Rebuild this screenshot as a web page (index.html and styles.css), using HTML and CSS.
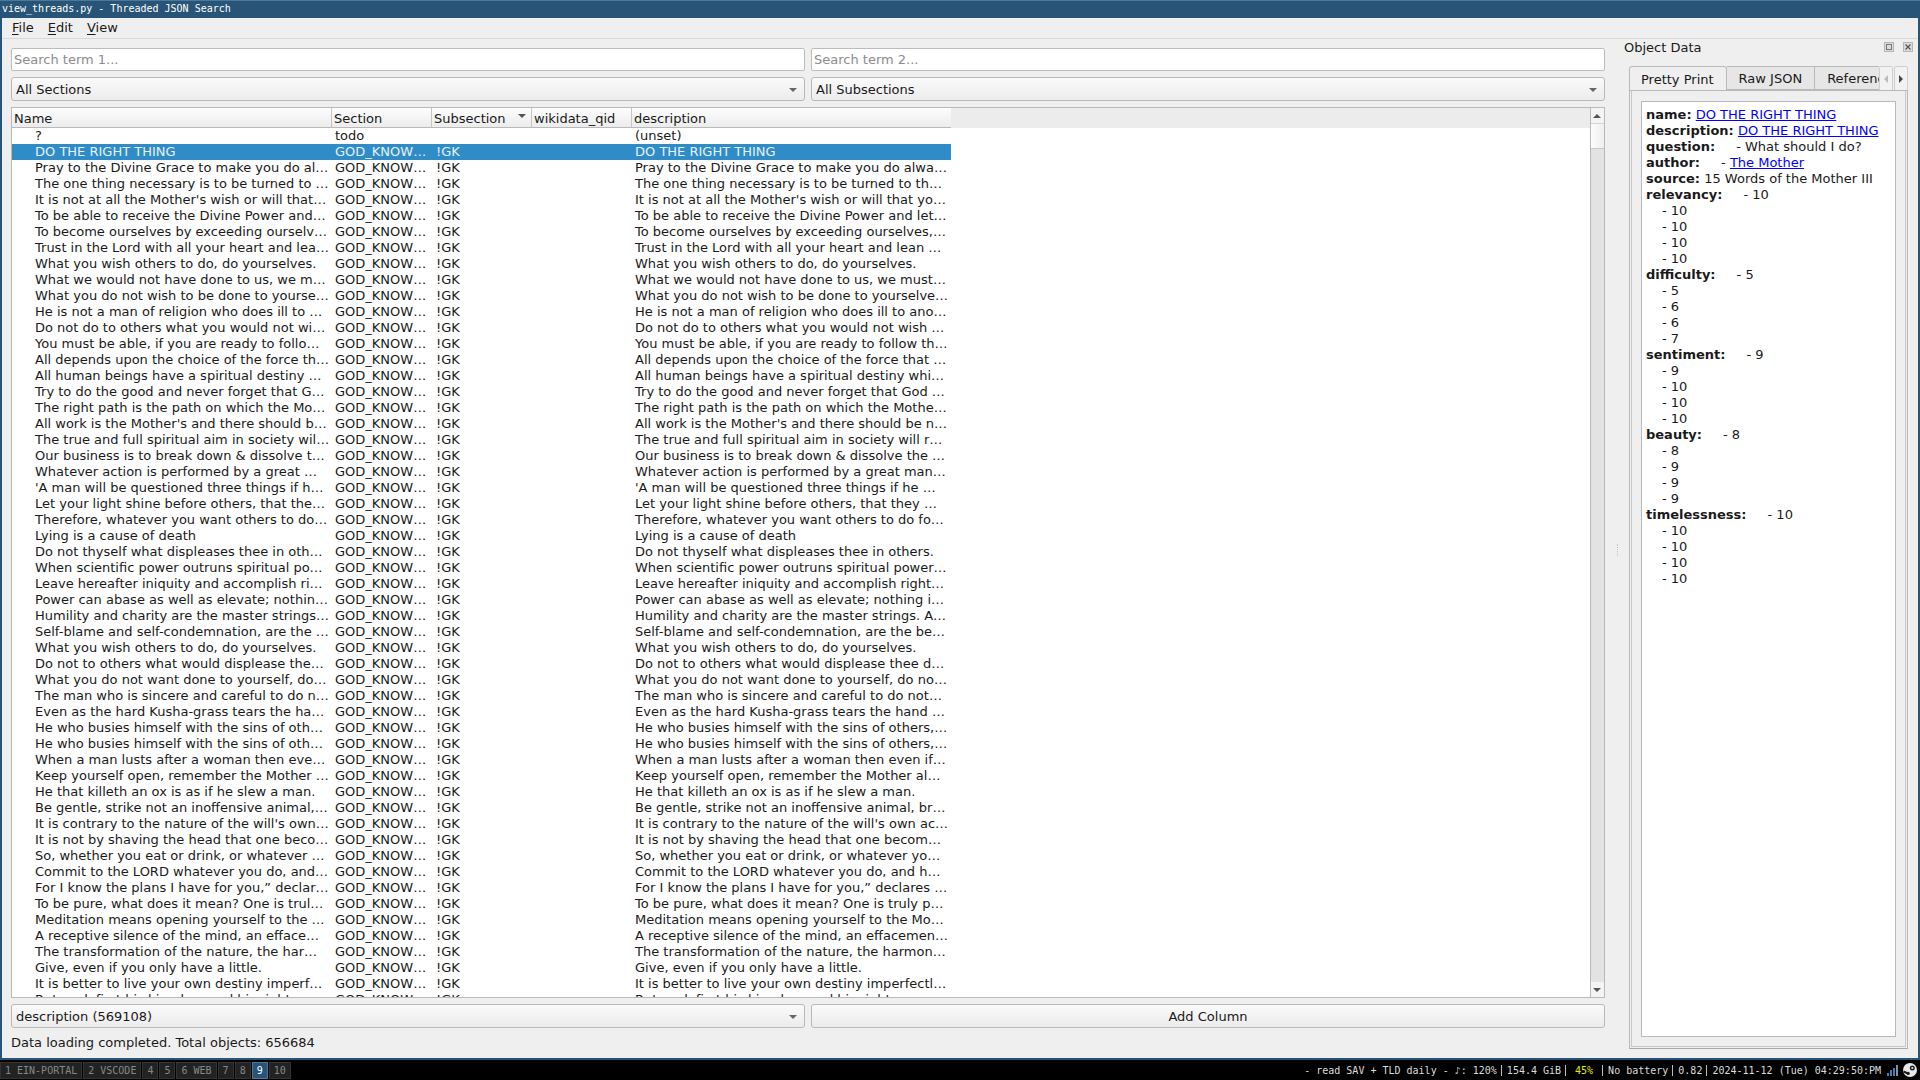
FILE: index.html
```html
<!DOCTYPE html>
<html>

<head>
  <title>view_threads.py - Threaded JSON Search</title>
  <link rel="stylesheet" href="styles.css">
</head>

<body>
  <div class="titlebar">view_threads.py - Threaded JSON Search</div>
  <div class="window">
    <div class="menubar">
      <span class="menu"><u>F</u>ile</span>
      <span class="menu"><u>E</u>dit</span>
      <span class="menu"><u>V</u>iew</span>
    </div>
    <div class="main">
      <div class="left">
        <div class="two-col">
          <div class="input">Search term 1...</div>
          <div class="input">Search term 2...</div>
        </div>
        <div class="two-col">
          <div class="combo">All Sections<i class="arrow"></i></div>
          <div class="combo">All Subsections<i class="arrow"></i></div>
        </div>
        <div class="table">
          <div class="table-view">
            <div class="header">
              <div class="hcell c-name">Name</div>
              <div class="hcell c-section">Section</div>
              <div class="hcell c-sub">Subsection<i class="sort"></i></div>
              <div class="hcell c-qid">wikidata_qid</div>
              <div class="hcell c-desc">description</div>
            </div>
            <div class="rows">
              <div class="row"><span class="c-name">?</span><span class="c-section">todo</span><span class="c-sub"></span><span class="c-qid"></span><span class="c-desc">(unset)</span></div>
              <div class="row selected"><span class="c-name">DO THE RIGHT THING</span><span class="c-section">GOD_KNOW…</span><span class="c-sub">!GK</span><span class="c-qid"></span><span class="c-desc">DO THE RIGHT THING</span></div>
              <div class="row"><span class="c-name">Pray to the Divine Grace to make you do al…</span><span class="c-section">GOD_KNOW…</span><span class="c-sub">!GK</span><span class="c-qid"></span><span class="c-desc">Pray to the Divine Grace to make you do alwa…</span></div>
              <div class="row"><span class="c-name">The one thing necessary is to be turned to …</span><span class="c-section">GOD_KNOW…</span><span class="c-sub">!GK</span><span class="c-qid"></span><span class="c-desc">The one thing necessary is to be turned to th…</span></div>
              <div class="row"><span class="c-name">It is not at all the Mother's wish or will that…</span><span class="c-section">GOD_KNOW…</span><span class="c-sub">!GK</span><span class="c-qid"></span><span class="c-desc">It is not at all the Mother's wish or will that yo…</span></div>
              <div class="row"><span class="c-name">To be able to receive the Divine Power and…</span><span class="c-section">GOD_KNOW…</span><span class="c-sub">!GK</span><span class="c-qid"></span><span class="c-desc">To be able to receive the Divine Power and let…</span></div>
              <div class="row"><span class="c-name">To become ourselves by exceeding ourselv…</span><span class="c-section">GOD_KNOW…</span><span class="c-sub">!GK</span><span class="c-qid"></span><span class="c-desc">To become ourselves by exceeding ourselves,…</span></div>
              <div class="row"><span class="c-name">Trust in the Lord with all your heart and lea…</span><span class="c-section">GOD_KNOW…</span><span class="c-sub">!GK</span><span class="c-qid"></span><span class="c-desc">Trust in the Lord with all your heart and lean …</span></div>
              <div class="row"><span class="c-name">What you wish others to do, do yourselves.</span><span class="c-section">GOD_KNOW…</span><span class="c-sub">!GK</span><span class="c-qid"></span><span class="c-desc">What you wish others to do, do yourselves.</span></div>
              <div class="row"><span class="c-name">What we would not have done to us, we m…</span><span class="c-section">GOD_KNOW…</span><span class="c-sub">!GK</span><span class="c-qid"></span><span class="c-desc">What we would not have done to us, we must…</span></div>
              <div class="row"><span class="c-name">What you do not wish to be done to yourse…</span><span class="c-section">GOD_KNOW…</span><span class="c-sub">!GK</span><span class="c-qid"></span><span class="c-desc">What you do not wish to be done to yourselve…</span></div>
              <div class="row"><span class="c-name">He is not a man of religion who does ill to …</span><span class="c-section">GOD_KNOW…</span><span class="c-sub">!GK</span><span class="c-qid"></span><span class="c-desc">He is not a man of religion who does ill to ano…</span></div>
              <div class="row"><span class="c-name">Do not do to others what you would not wi…</span><span class="c-section">GOD_KNOW…</span><span class="c-sub">!GK</span><span class="c-qid"></span><span class="c-desc">Do not do to others what you would not wish …</span></div>
              <div class="row"><span class="c-name">You must be able, if you are ready to follo…</span><span class="c-section">GOD_KNOW…</span><span class="c-sub">!GK</span><span class="c-qid"></span><span class="c-desc">You must be able, if you are ready to follow th…</span></div>
              <div class="row"><span class="c-name">All depends upon the choice of the force th…</span><span class="c-section">GOD_KNOW…</span><span class="c-sub">!GK</span><span class="c-qid"></span><span class="c-desc">All depends upon the choice of the force that …</span></div>
              <div class="row"><span class="c-name">All human beings have a spiritual destiny …</span><span class="c-section">GOD_KNOW…</span><span class="c-sub">!GK</span><span class="c-qid"></span><span class="c-desc">All human beings have a spiritual destiny whi…</span></div>
              <div class="row"><span class="c-name">Try to do the good and never forget that G…</span><span class="c-section">GOD_KNOW…</span><span class="c-sub">!GK</span><span class="c-qid"></span><span class="c-desc">Try to do the good and never forget that God …</span></div>
              <div class="row"><span class="c-name">The right path is the path on which the Mo…</span><span class="c-section">GOD_KNOW…</span><span class="c-sub">!GK</span><span class="c-qid"></span><span class="c-desc">The right path is the path on which the Mothe…</span></div>
              <div class="row"><span class="c-name">All work is the Mother's and there should b…</span><span class="c-section">GOD_KNOW…</span><span class="c-sub">!GK</span><span class="c-qid"></span><span class="c-desc">All work is the Mother's and there should be n…</span></div>
              <div class="row"><span class="c-name">The true and full spiritual aim in society wil…</span><span class="c-section">GOD_KNOW…</span><span class="c-sub">!GK</span><span class="c-qid"></span><span class="c-desc">The true and full spiritual aim in society will r…</span></div>
              <div class="row"><span class="c-name">Our business is to break down &amp; dissolve t…</span><span class="c-section">GOD_KNOW…</span><span class="c-sub">!GK</span><span class="c-qid"></span><span class="c-desc">Our business is to break down &amp; dissolve the …</span></div>
              <div class="row"><span class="c-name">Whatever action is performed by a great …</span><span class="c-section">GOD_KNOW…</span><span class="c-sub">!GK</span><span class="c-qid"></span><span class="c-desc">Whatever action is performed by a great man…</span></div>
              <div class="row"><span class="c-name">'A man will be questioned three things if h…</span><span class="c-section">GOD_KNOW…</span><span class="c-sub">!GK</span><span class="c-qid"></span><span class="c-desc">'A man will be questioned three things if he …</span></div>
              <div class="row"><span class="c-name">Let your light shine before others, that the…</span><span class="c-section">GOD_KNOW…</span><span class="c-sub">!GK</span><span class="c-qid"></span><span class="c-desc">Let your light shine before others, that they …</span></div>
              <div class="row"><span class="c-name">Therefore, whatever you want others to do…</span><span class="c-section">GOD_KNOW…</span><span class="c-sub">!GK</span><span class="c-qid"></span><span class="c-desc">Therefore, whatever you want others to do fo…</span></div>
              <div class="row"><span class="c-name">Lying is a cause of death</span><span class="c-section">GOD_KNOW…</span><span class="c-sub">!GK</span><span class="c-qid"></span><span class="c-desc">Lying is a cause of death</span></div>
              <div class="row"><span class="c-name">Do not thyself what displeases thee in oth…</span><span class="c-section">GOD_KNOW…</span><span class="c-sub">!GK</span><span class="c-qid"></span><span class="c-desc">Do not thyself what displeases thee in others.</span></div>
              <div class="row"><span class="c-name">When scientific power outruns spiritual po…</span><span class="c-section">GOD_KNOW…</span><span class="c-sub">!GK</span><span class="c-qid"></span><span class="c-desc">When scientific power outruns spiritual power…</span></div>
              <div class="row"><span class="c-name">Leave hereafter iniquity and accomplish ri…</span><span class="c-section">GOD_KNOW…</span><span class="c-sub">!GK</span><span class="c-qid"></span><span class="c-desc">Leave hereafter iniquity and accomplish right…</span></div>
              <div class="row"><span class="c-name">Power can abase as well as elevate; nothin…</span><span class="c-section">GOD_KNOW…</span><span class="c-sub">!GK</span><span class="c-qid"></span><span class="c-desc">Power can abase as well as elevate; nothing i…</span></div>
              <div class="row"><span class="c-name">Humility and charity are the master strings…</span><span class="c-section">GOD_KNOW…</span><span class="c-sub">!GK</span><span class="c-qid"></span><span class="c-desc">Humility and charity are the master strings. A…</span></div>
              <div class="row"><span class="c-name">Self-blame and self-condemnation, are the …</span><span class="c-section">GOD_KNOW…</span><span class="c-sub">!GK</span><span class="c-qid"></span><span class="c-desc">Self-blame and self-condemnation, are the be…</span></div>
              <div class="row"><span class="c-name">What you wish others to do, do yourselves.</span><span class="c-section">GOD_KNOW…</span><span class="c-sub">!GK</span><span class="c-qid"></span><span class="c-desc">What you wish others to do, do yourselves.</span></div>
              <div class="row"><span class="c-name">Do not to others what would displease the…</span><span class="c-section">GOD_KNOW…</span><span class="c-sub">!GK</span><span class="c-qid"></span><span class="c-desc">Do not to others what would displease thee d…</span></div>
              <div class="row"><span class="c-name">What you do not want done to yourself, do…</span><span class="c-section">GOD_KNOW…</span><span class="c-sub">!GK</span><span class="c-qid"></span><span class="c-desc">What you do not want done to yourself, do no…</span></div>
              <div class="row"><span class="c-name">The man who is sincere and careful to do n…</span><span class="c-section">GOD_KNOW…</span><span class="c-sub">!GK</span><span class="c-qid"></span><span class="c-desc">The man who is sincere and careful to do not…</span></div>
              <div class="row"><span class="c-name">Even as the hard Kusha-grass tears the ha…</span><span class="c-section">GOD_KNOW…</span><span class="c-sub">!GK</span><span class="c-qid"></span><span class="c-desc">Even as the hard Kusha-grass tears the hand …</span></div>
              <div class="row"><span class="c-name">He who busies himself with the sins of oth…</span><span class="c-section">GOD_KNOW…</span><span class="c-sub">!GK</span><span class="c-qid"></span><span class="c-desc">He who busies himself with the sins of others,…</span></div>
              <div class="row"><span class="c-name">He who busies himself with the sins of oth…</span><span class="c-section">GOD_KNOW…</span><span class="c-sub">!GK</span><span class="c-qid"></span><span class="c-desc">He who busies himself with the sins of others,…</span></div>
              <div class="row"><span class="c-name">When a man lusts after a woman then eve…</span><span class="c-section">GOD_KNOW…</span><span class="c-sub">!GK</span><span class="c-qid"></span><span class="c-desc">When a man lusts after a woman then even if…</span></div>
              <div class="row"><span class="c-name">Keep yourself open, remember the Mother …</span><span class="c-section">GOD_KNOW…</span><span class="c-sub">!GK</span><span class="c-qid"></span><span class="c-desc">Keep yourself open, remember the Mother al…</span></div>
              <div class="row"><span class="c-name">He that killeth an ox is as if he slew a man.</span><span class="c-section">GOD_KNOW…</span><span class="c-sub">!GK</span><span class="c-qid"></span><span class="c-desc">He that killeth an ox is as if he slew a man.</span></div>
              <div class="row"><span class="c-name">Be gentle, strike not an inoffensive animal,…</span><span class="c-section">GOD_KNOW…</span><span class="c-sub">!GK</span><span class="c-qid"></span><span class="c-desc">Be gentle, strike not an inoffensive animal, br…</span></div>
              <div class="row"><span class="c-name">It is contrary to the nature of the will's own…</span><span class="c-section">GOD_KNOW…</span><span class="c-sub">!GK</span><span class="c-qid"></span><span class="c-desc">It is contrary to the nature of the will's own ac…</span></div>
              <div class="row"><span class="c-name">It is not by shaving the head that one beco…</span><span class="c-section">GOD_KNOW…</span><span class="c-sub">!GK</span><span class="c-qid"></span><span class="c-desc">It is not by shaving the head that one becom…</span></div>
              <div class="row"><span class="c-name">So, whether you eat or drink, or whatever …</span><span class="c-section">GOD_KNOW…</span><span class="c-sub">!GK</span><span class="c-qid"></span><span class="c-desc">So, whether you eat or drink, or whatever yo…</span></div>
              <div class="row"><span class="c-name">Commit to the LORD whatever you do, and…</span><span class="c-section">GOD_KNOW…</span><span class="c-sub">!GK</span><span class="c-qid"></span><span class="c-desc">Commit to the LORD whatever you do, and h…</span></div>
              <div class="row"><span class="c-name">For I know the plans I have for you,” declar…</span><span class="c-section">GOD_KNOW…</span><span class="c-sub">!GK</span><span class="c-qid"></span><span class="c-desc">For I know the plans I have for you,” declares …</span></div>
              <div class="row"><span class="c-name">To be pure, what does it mean? One is trul…</span><span class="c-section">GOD_KNOW…</span><span class="c-sub">!GK</span><span class="c-qid"></span><span class="c-desc">To be pure, what does it mean? One is truly p…</span></div>
              <div class="row"><span class="c-name">Meditation means opening yourself to the …</span><span class="c-section">GOD_KNOW…</span><span class="c-sub">!GK</span><span class="c-qid"></span><span class="c-desc">Meditation means opening yourself to the Mo…</span></div>
              <div class="row"><span class="c-name">A receptive silence of the mind, an efface…</span><span class="c-section">GOD_KNOW…</span><span class="c-sub">!GK</span><span class="c-qid"></span><span class="c-desc">A receptive silence of the mind, an effacemen…</span></div>
              <div class="row"><span class="c-name">The transformation of the nature, the har…</span><span class="c-section">GOD_KNOW…</span><span class="c-sub">!GK</span><span class="c-qid"></span><span class="c-desc">The transformation of the nature, the harmon…</span></div>
              <div class="row"><span class="c-name">Give, even if you only have a little.</span><span class="c-section">GOD_KNOW…</span><span class="c-sub">!GK</span><span class="c-qid"></span><span class="c-desc">Give, even if you only have a little.</span></div>
              <div class="row"><span class="c-name">It is better to live your own destiny imperf…</span><span class="c-section">GOD_KNOW…</span><span class="c-sub">!GK</span><span class="c-qid"></span><span class="c-desc">It is better to live your own destiny imperfectl…</span></div>
              <div class="row"><span class="c-name">But seek first his kingdom and his right…</span><span class="c-section">GOD_KNOW…</span><span class="c-sub">!GK</span><span class="c-qid"></span><span class="c-desc">But seek first his kingdom and his right…</span></div>
            </div>
          </div>
          <div class="scrollbar">
            <div class="sb-btn"><i class="tri-up"></i></div>
            <div class="sb-handle"></div>
            <div class="sb-track"></div>
            <div class="sb-btn"><i class="tri-down"></i></div>
          </div>
        </div>
        <div class="two-col">
          <div class="combo">description (569108)<i class="arrow"></i></div>
          <div class="button">Add Column</div>
        </div>
        <div class="status">Data loading completed. Total objects: 656684</div>
      </div>

      <div class="dock">
        <div class="splitter"></div>
        <div class="dock-title">
          <span>Object Data</span>
          <div class="dock-btns">
            <span class="dock-btn"><svg width="10" height="10" viewBox="0 0 10 10"><rect x="0.5" y="0.5" width="9" height="9" fill="#dcdcdc" stroke="#b5b5b5"/><rect x="2.5" y="2.5" width="5" height="5" fill="none" stroke="#777"/></svg></span>
            <span class="dock-btn"><svg width="10" height="10" viewBox="0 0 10 10"><rect x="0.5" y="0.5" width="9" height="9" fill="#dcdcdc" stroke="#b5b5b5"/><path d="M2.5 2.5l5 5M7.5 2.5l-5 5" stroke="#555" stroke-width="1.2"/></svg></span>
          </div>
        </div>
        <div class="tabs">
          <div class="tab active">Pretty Print</div>
          <div class="tab">Raw JSON</div>
          <div class="tab">References</div>
          <div class="tab-scroll">
            <span class="tab-arrow"><i class="tri-left"></i></span>
            <span class="tab-arrow"><i class="tri-right"></i></span>
          </div>
        </div>
        <div class="pane">
          <div class="pane-inner">
            <div class="browser">
              <div><b>name:</b> <a href="#">DO THE RIGHT THING</a></div>
              <div><b>description:</b> <a href="#">DO THE RIGHT THING</a></div>
              <div><b>question:</b><span class="gap-a">- What should I do?</span></div>
              <div><b>author:</b><span class="gap-a">- <a href="#">The Mother</a></span></div>
              <div><b>source:</b> 15 Words of the Mother III</div>
              <div><b>relevancy:</b><span class="gap-a">- 10</span></div>
              <div class="sub">- 10</div>
              <div class="sub">- 10</div>
              <div class="sub">- 10</div>
              <div class="sub">- 10</div>
              <div><b>difficulty:</b><span class="gap-a">- 5</span></div>
              <div class="sub">- 5</div>
              <div class="sub">- 6</div>
              <div class="sub">- 6</div>
              <div class="sub">- 7</div>
              <div><b>sentiment:</b><span class="gap-a">- 9</span></div>
              <div class="sub">- 9</div>
              <div class="sub">- 10</div>
              <div class="sub">- 10</div>
              <div class="sub">- 10</div>
              <div><b>beauty:</b><span class="gap-a">- 8</span></div>
              <div class="sub">- 8</div>
              <div class="sub">- 9</div>
              <div class="sub">- 9</div>
              <div class="sub">- 9</div>
              <div><b>timelessness:</b><span class="gap-a">- 10</span></div>
              <div class="sub">- 10</div>
              <div class="sub">- 10</div>
              <div class="sub">- 10</div>
              <div class="sub">- 10</div>
            </div>
          </div>
        </div>
      </div>
    </div>
  </div>

  <div class="bar">
    <div class="workspaces">
      <span class="ws">1 EIN-PORTAL</span>
      <span class="ws">2 VSCODE</span>
      <span class="ws">4</span>
      <span class="ws">5</span>
      <span class="ws">6 WEB</span>
      <span class="ws">7</span>
      <span class="ws">8</span>
      <span class="ws focused">9</span>
      <span class="ws">10</span>
    </div>
    <div class="tray">
      <span class="st">- read SAV + TLD daily - ♪: 120%</span>
      <span class="st">154.4 GiB</span>
      <span class="st load">45%</span>
      <span class="st">No battery</span>
      <span class="st">0.82</span>
      <span class="st last">2024-11-12 (Tue) 04:29:50:PM</span>
      <svg class="wifi" width="12" height="11" viewBox="0 0 12 11"><rect x="0" y="8" width="2" height="3" fill="#3f7fc0"/><rect x="3" y="5" width="2" height="6" fill="#3f7fc0"/><rect x="6" y="3" width="2" height="8" fill="#3f7fc0"/><rect x="9" y="0" width="2" height="11" fill="#8a8f94"/></svg>
      <svg class="steam" width="14" height="14" viewBox="0 0 14 14"><circle cx="7" cy="7" r="7" fill="#e8e8e8"/><circle cx="9.3" cy="5" r="2.5" fill="#1a1a1a"/><circle cx="9.3" cy="5" r="1.1" fill="#e8e8e8"/><path d="M0.5 8.5l4.5 2" stroke="#1a1a1a" stroke-width="2"/><circle cx="5.2" cy="10.4" r="1.6" fill="#1a1a1a"/></svg>
    </div>
  </div>
</body>

</html>
```

FILE: styles.css
```css
* {
  box-sizing: border-box;
}

html,
body {
  margin: 0;
  height: 100%;
}

body {
  width: 1920px;
  height: 1080px;
  overflow: hidden;
  display: flex;
  flex-direction: column;
  font-family: "DejaVu Sans", sans-serif;
  font-size: 13px;
  color: #1a1a1a;
  background: #000;
}

.titlebar {
  height: 18px;
  flex: none;
  padding-left: 2px;
  background: #285577;
  border-top: 1px solid #4c7899;
  color: #fff;
  font-family: "DejaVu Sans Mono", monospace;
  font-size: 10px;
  line-height: 15px;
}

.window {
  flex: 1;
  min-height: 0;
  display: flex;
  flex-direction: column;
  background: #efefef;
  border-left: 2px solid #285577;
  border-right: 2px solid #285577;
  border-bottom: 2px solid #285577;
}

.menubar {
  height: 21px;
  flex: none;
  display: flex;
  align-items: center;
  padding: 0 0 2px 10px;
  gap: 14px;
  border-bottom: 1px solid #d8d8d8;
}

.menu u {
  text-underline-offset: 2px;
}

.main {
  flex: 1;
  min-height: 0;
  display: flex;
}

.left {
  width: 1603px;
  flex: none;
  padding: 9px 0 6px 9px;
  display: flex;
  flex-direction: column;
  gap: 6px;
}

.two-col {
  display: grid;
  grid-template-columns: 794px 794px;
  gap: 6px;
  flex: none;
}

.input {
  height: 23px;
  padding: 0 2px;
  line-height: 21px;
  background: #fff;
  border: 1px solid #bcbcbc;
  border-radius: 2px;
  color: #8c8c8c;
}

.combo,
.button {
  position: relative;
  height: 24px;
  padding: 0 4px;
  line-height: 24px;
  background: linear-gradient(#fafafa, #ececec);
  border: 1px solid #b9b9b9;
  border-radius: 3px;
}

.button {
  text-align: center;
}

.arrow {
  position: absolute;
  right: 7px;
  top: 10px;
  border-left: 4px solid transparent;
  border-right: 4px solid transparent;
  border-top: 4px solid #666;
}

.table {
  flex: 1;
  min-height: 0;
  display: flex;
  background: #fff;
  border: 1px solid #b9b9b9;
}

.table-view {
  flex: 1;
  min-width: 0;
  overflow: hidden;
}

.header {
  display: flex;
  height: 20px;
  background: #ececec;
}

.hcell {
  position: relative;
  height: 20px;
  padding-left: 2px;
  line-height: 21px;
  background: linear-gradient(#fdfdfd, #ececec);
  border-right: 1px solid #c4c4c4;
  border-bottom: 1px solid #b9b9b9;
}

.hcell.c-desc {
  border-right: 0;
}

.sort {
  position: absolute;
  right: 5px;
  top: 6px;
  border-left: 4px solid transparent;
  border-right: 4px solid transparent;
  border-top: 4px solid #555;
}

.c-name {
  width: 320px;
}

.c-section,
.c-sub,
.c-qid {
  width: 100px;
}

.c-desc {
  width: 319px;
}

.rows {
  overflow: hidden;
}

.row {
  display: flex;
  height: 16px;
  line-height: 16px;
  white-space: nowrap;
  width: 939px;
}

.row span {
  display: block;
  overflow: hidden;
  padding-left: 3px;
}

.row .c-name {
  padding-left: 23px;
}

.row .c-sub {
  padding-left: 4px;
}

.selected {
  background: #308cc6;
  color: #e6f1f9;
}

.scrollbar {
  width: 14px;
  flex: none;
  display: flex;
  flex-direction: column;
  background: #e3e3e3;
  border-left: 1px solid #b9b9b9;
}

.sb-btn {
  height: 15px;
  flex: none;
  display: flex;
  align-items: center;
  justify-content: center;
  padding-right: 1px;
  background: #f4f4f4;
}

.sb-handle {
  height: 26px;
  flex: none;
  background: linear-gradient(90deg, #fdfdfd, #eeeeee);
  border-top: 1px solid #d4d4d4;
  border-bottom: 1px solid #c8c8c8;
}

.sb-track {
  flex: 1;
}

.tri-up {
  border-left: 4px solid transparent;
  border-right: 4px solid transparent;
  border-bottom: 4px solid #555;
}

.tri-down {
  border-left: 4px solid transparent;
  border-right: 4px solid transparent;
  border-top: 4px solid #555;
}

.tri-left {
  border-top: 4px solid transparent;
  border-bottom: 4px solid transparent;
  border-right: 4px solid #bbb;
}

.tri-right {
  border-top: 4px solid transparent;
  border-bottom: 4px solid transparent;
  border-left: 4px solid #444;
}

.status {
  height: 18px;
  line-height: 18px;
  flex: none;
}

.dock {
  position: relative;
  flex: 1;
  min-width: 0;
  padding: 0 10px 9px 24px;
  display: flex;
  flex-direction: column;
}

.splitter {
  position: absolute;
  left: 12px;
  top: 505px;
  height: 12px;
  border-left: 1px dotted #c4c4c4;
}

.dock-title {
  height: 27px;
  flex: none;
  display: flex;
  align-items: center;
  justify-content: space-between;
  padding-bottom: 11px;
  margin-left: -5px;
  margin-right: -5px;
}

.dock-btns {
  display: flex;
  gap: 9px;
}

.dock-btn {
  width: 10px;
  height: 10px;
  display: flex;
}

.tabs {
  position: relative;
  display: flex;
  align-items: flex-end;
  height: 25px;
  flex: none;
  overflow: hidden;
  border-bottom: 1px solid #b9b9b9;
}

.tab {
  height: 24px;
  flex: none;
  padding: 0 12px;
  line-height: 24px;
  background: #e6e6e6;
  border: 1px solid #b9b9b9;
  border-left: 0;
  white-space: nowrap;
}

.tab.active {
  position: relative;
  height: 25px;
  margin-bottom: -1px;
  padding: 0 12px 0 11px;
  background: #efefef;
  border-left: 1px solid #b9b9b9;
  border-bottom: 0;
  border-radius: 3px 3px 0 0;
  line-height: 26px;
}

.tab-scroll {
  position: absolute;
  right: 0;
  top: 0;
  display: flex;
  gap: 1px;
  background: #efefef;
}

.tab-arrow {
  width: 14px;
  height: 25px;
  display: flex;
  align-items: center;
  justify-content: center;
  background: #f2f2f2;
  border: 1px solid #cfcfcf;
  border-radius: 2px;
}

.pane {
  flex: 1;
  min-height: 0;
  padding: 0 1px 1px;
  border: 1px solid #b9b9b9;
  border-top: 0;
  border-bottom-color: #a8a8a8;
}

.pane-inner {
  height: 100%;
  padding: 10px 9px 9px;
  border: 1px solid #c8c8c8;
  border-top: 0;
}

.browser {
  height: 100%;
  padding: 5px 4px 4px;
  background: #fff;
  border: 1px solid #b9b9b9;
  line-height: 16px;
}

.browser a {
  color: #0000ff;
}

.gap-a {
  padding-left: 21px;
}

.sub {
  padding-left: 16px;
}

.bar {
  height: 20px;
  flex: none;
  display: flex;
  justify-content: space-between;
  align-items: center;
  background: #000;
  color: #dcdcdc;
  font-family: "DejaVu Sans Mono", monospace;
  font-size: 10px;
}

.workspaces {
  display: flex;
  gap: 1px;
}

.ws {
  height: 17px;
  padding: 0 4px;
  line-height: 15px;
  background: #222;
  border: 1px solid #333;
  color: #888;
}

.ws.focused {
  background: #285577;
  border-color: #4c7899;
  color: #fff;
}

.tray {
  display: flex;
  align-items: center;
  padding-right: 3px;
}

.st {
  padding: 0 4px 0 5px;
  border-right: 1px solid #bbb;
}

.st.load {
  padding: 0 9px;
  color: #e8e800;
}

.st.last {
  border-right: 0;
  margin-right: 2px;
}

.wifi {
  margin-right: 4px;
}
```
